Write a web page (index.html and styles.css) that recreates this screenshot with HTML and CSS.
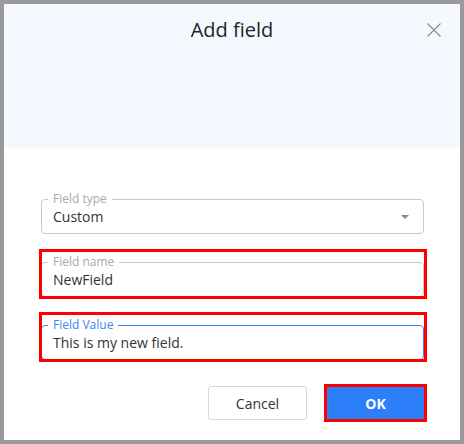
FILE: index.html
```html
<!DOCTYPE html>
<html lang="en">
<head>
<meta charset="utf-8">
<title>Add field</title>
<link rel="stylesheet" href="styles.css">
</head>
<body>
<div class="dialog">
  <header class="dlg-head">
    <span class="dlg-spacer"></span>
    <h1 class="dlg-title">Add field</h1>
    <button class="dlg-close" type="button" aria-label="Close">
      <svg width="14" height="14" viewBox="0 0 14 14" aria-hidden="true">
        <path d="M0.5 0.5 L13.5 13.5 M13.5 0.5 L0.5 13.5" stroke="#8a8a8a" stroke-width="1.1" fill="none"/>
      </svg>
    </button>
  </header>
  <div class="dlg-body">
    <div class="field">
      <fieldset class="field-box">
        <legend class="field-label">Field type</legend>
        <div class="field-row">
          <span class="field-value">Custom</span>
          <span class="caret"></span>
        </div>
      </fieldset>
    </div>
    <div class="field marked">
      <fieldset class="field-box">
        <legend class="field-label">Field name</legend>
        <div class="field-row"><span class="field-value">NewField</span></div>
      </fieldset>
    </div>
    <div class="field marked">
      <fieldset class="field-box focused">
        <legend class="field-label">Field Value</legend>
        <div class="field-row"><span class="field-value">This is my new field.</span></div>
      </fieldset>
    </div>
  </div>
  <footer class="dlg-actions">
    <button class="btn btn-default" type="button">Cancel</button>
    <button class="btn btn-primary" type="button">OK</button>
  </footer>
</div>
</body>
</html>
```
FILE: styles.css
```css
html, body {
  margin: 0;
  padding: 0;
}
body {
  width: 464px;
  height: 444px;
  font-family: "Open Sans", "Noto Sans", sans-serif;
  background: #ffffff;
}
.dialog {
  box-sizing: border-box;
  width: 464px;
  height: 444px;
  border: 4px solid #999999;
  background: #ffffff;
  display: flex;
  flex-direction: column;
}
.dlg-head {
  box-sizing: border-box;
  height: 144px;
  flex: none;
  background: #f5f8ff;
  display: grid;
  grid-template-columns: 1fr auto 1fr;
  align-items: start;
  padding-top: 12px;
}
.dlg-title {
  margin: 0;
  font-size: 20px;
  line-height: 28px;
  font-weight: 400;
  color: #242424;
}
.dlg-close {
  justify-self: end;
  margin-right: 12px;
  width: 28px;
  height: 28px;
  padding: 0;
  border: 0;
  background: none;
  display: flex;
  align-items: center;
  justify-content: center;
}
.dlg-close svg {
  display: block;
}
.dlg-body {
  display: flex;
  flex-direction: column;
  gap: 20px;
  padding: 43px 36px 0 37px;
}
.field {
  position: relative;
}
.field-box {
  margin: 0;
  min-width: 0;
  border: 1px solid #c9c9c9;
  border-radius: 4px;
  padding: 0 6px 6px;
}
.field-box.focused {
  border-color: #3a86f7;
}
.field-label {
  padding: 0 5px;
  font-size: 12px;
  line-height: 16px;
  color: #a8a8a8;
}
.focused .field-label {
  color: #3a86f7;
}
.field-row {
  display: flex;
  align-items: center;
  justify-content: space-between;
  height: 20px;
  padding-left: 5px;
  font-size: 14px;
  line-height: 20px;
  color: #333333;
}
.caret {
  width: 0;
  height: 0;
  margin-right: 8px;
  border-left: 4px solid transparent;
  border-right: 4px solid transparent;
  border-top: 4px solid #8a8a8a;
}
.marked::after {
  content: "";
  position: absolute;
  left: -2px;
  right: -3px;
  top: -5px;
  bottom: -2px;
  border: 3px solid #ff0000;
  pointer-events: none;
}
.dlg-actions {
  display: flex;
  justify-content: flex-end;
  gap: 19px;
  padding: 26px 35px 0 0;
}
.btn {
  box-sizing: border-box;
  width: 99px;
  height: 34px;
  border-radius: 3px;
  font-family: "Open Sans", "Noto Sans", sans-serif;
  font-size: 14px;
  padding: 0;
}
.btn-default {
  background: #ffffff;
  border: 1px solid #d9d9d9;
  color: #333333;
}
.btn-primary {
  position: relative;
  background: #2d7ff9;
  border: 1px solid #2d7ff9;
  border-radius: 0;
  color: #ffffff;
  font-weight: 700;
}
.btn-primary::after {
  content: "";
  position: absolute;
  left: -3px;
  right: -3px;
  top: -3px;
  bottom: -3px;
  border: 3px solid #ff0000;
  pointer-events: none;
}
```
